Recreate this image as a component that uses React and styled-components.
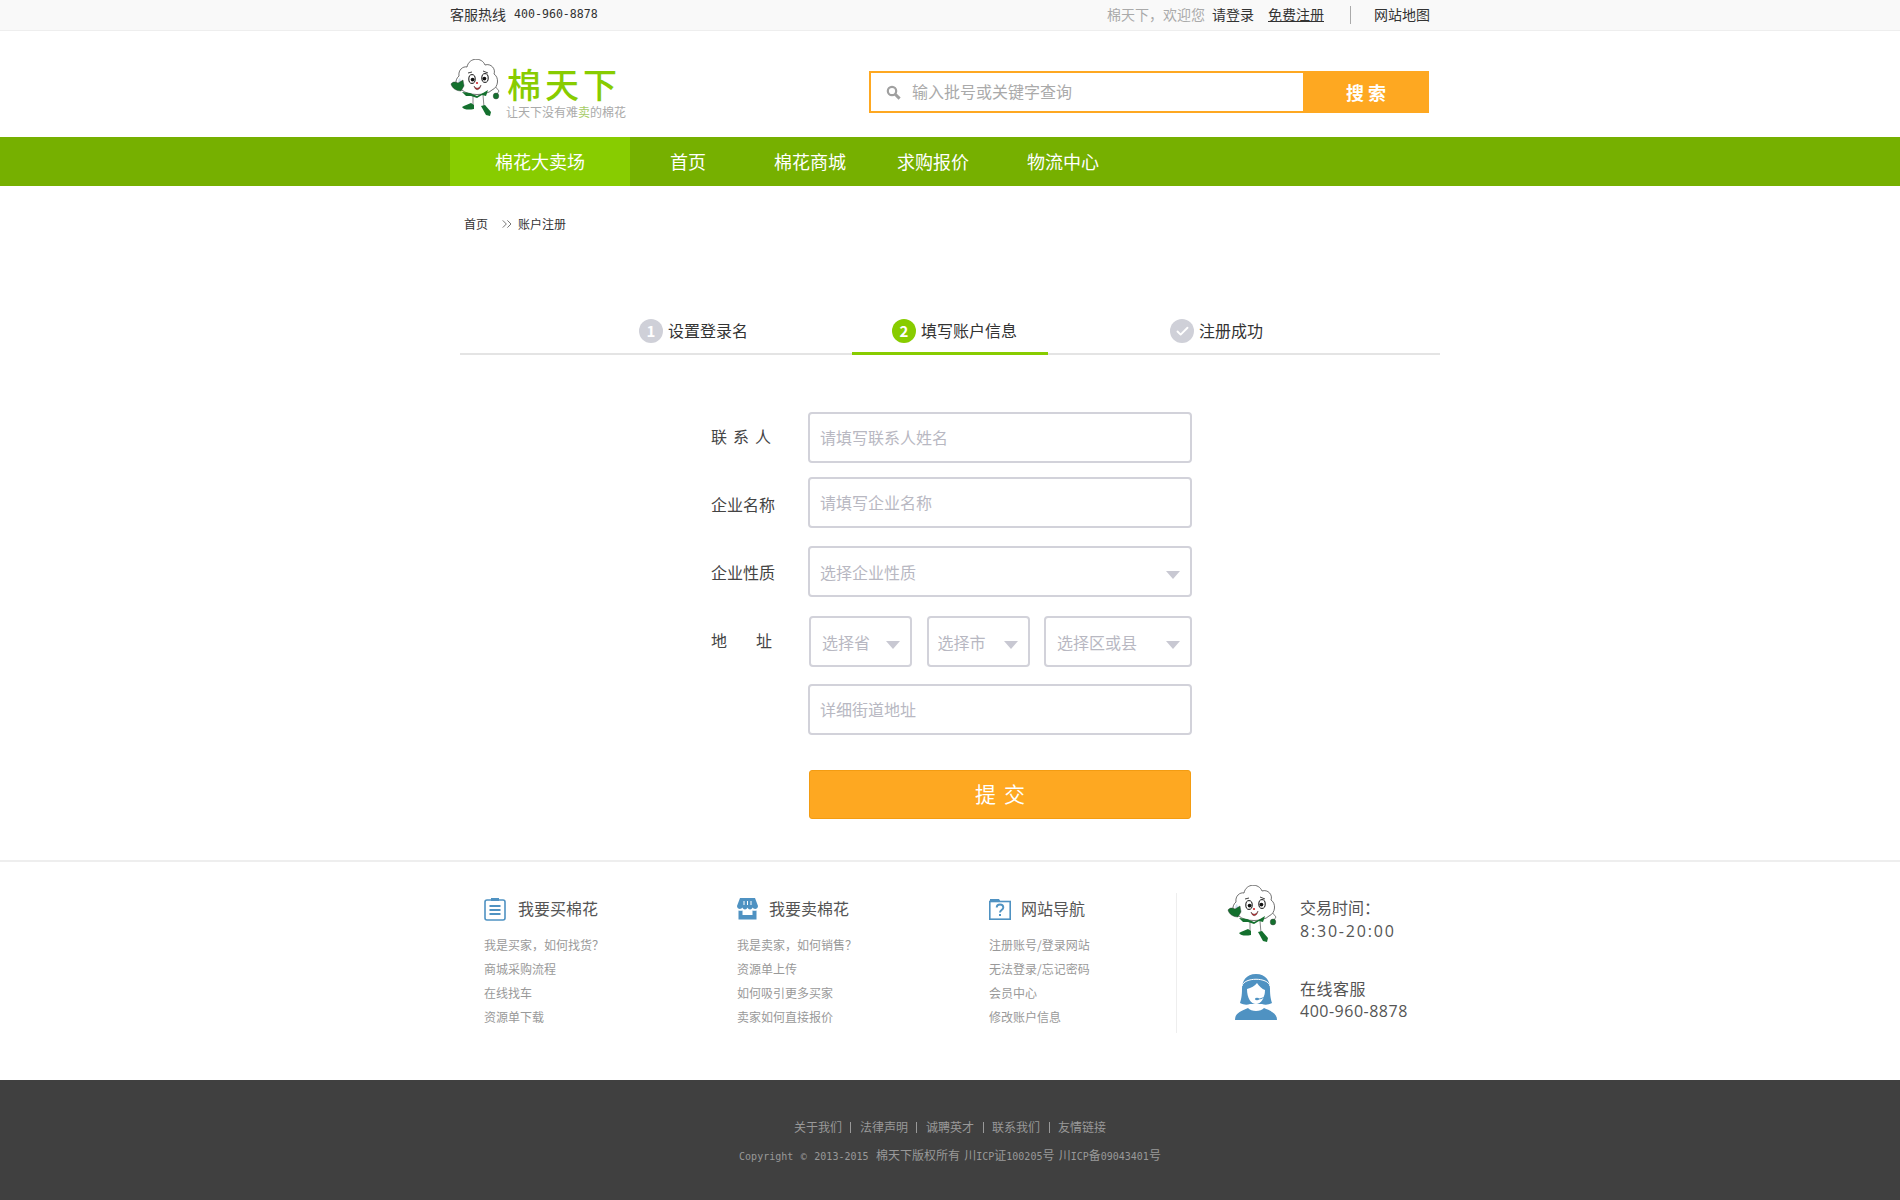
import React from 'react';
import styled, { createGlobalStyle } from 'styled-components';
import { Check, ChevronsRight } from 'lucide-react';

const GlobalStyle = createGlobalStyle`
  html, body {
    margin: 0;
    padding: 0;
    background: #fff;
    font-family: "Noto Sans CJK SC", "Liberation Sans", sans-serif;
    color: #333;
  }
  * { box-sizing: border-box; }
  a { color: inherit; text-decoration: none; }
`;

const Container = styled.div`
  width: 1000px;
  margin: 0 auto;
`;

const TopBar = styled.div`
  height: 31px;
  background: #f9f9f9;
  border-bottom: 1px solid #eee;
  font-size: 14px;
  line-height: 29px;
`;
const TopInner = styled(Container)`
  display: flex;
  justify-content: space-between;
  padding-right: 20px;
`;
const Hotline = styled.div`
  display: flex;
  gap: 8px;
`;
const HotNumber = styled.span`
  font-family: "DejaVu Sans Mono", monospace;
  font-size: 11.6px;
`;
const TopLinks = styled.div`
  display: flex;
  align-items: center;
`;
const Welcome = styled.span`
  color: #aaa;
  margin-right: 7px;
`;
const TopLink = styled.a`
  margin-right: ${(p) => p.$gap}px;
  text-decoration: ${(p) => (p.$underline ? 'underline' : 'none')};
`;
const TopDivider = styled.span`
  width: 1px;
  height: 18px;
  background: #aaa;
  margin: 0 23px 0 0;
`;

const Header = styled(Container)`
  height: 106px;
  padding-top: 28px;
  display: flex;
  align-items: flex-start;
`;
const Logo = styled.div`
  width: 419px;
  display: flex;
  gap: 6px;
`;
const LogoWord = styled.div`
  margin: 7px 0 0 1px;
  font-size: 34px;
  font-weight: 500;
  line-height: 36px;
  letter-spacing: 4px;
  color: #88cc00;
  white-space: nowrap;
`;
const Tagline = styled.div`
  margin-top: 3px;
  font-size: 12px;
  line-height: 14px;
  color: #aaa;
  b {
    font-weight: 400;
    color: #a6cc66;
  }
`;
const SearchBox = styled.form`
  margin-top: 12px;
  width: 560px;
  height: 42px;
  display: flex;
  border: 2px solid #fea821;
`;
const SearchField = styled.div`
  flex: 1;
  display: flex;
  align-items: center;
  gap: 11px;
  padding-left: 15px;
  color: #a0a0a0;
`;
const SearchInput = styled.input`
  flex: 1;
  border: 0;
  outline: 0;
  padding: 0 0 2px;
  font: inherit;
  font-size: 16px;
  &::placeholder { color: #aaa; opacity: 1; }
`;
const SearchButton = styled.button`
  width: 126px;
  margin: -2px -2px -2px 0;
  border: 0;
  padding: 0 0 0 4px;
  background: #fea821;
  color: #fff;
  font: inherit;
  font-size: 18px;
  font-weight: 700;
  letter-spacing: 4px;
`;

const NavBar = styled.nav`
  height: 49px;
  background: #76b000;
`;
const NavList = styled(Container)`
  display: flex;
`;
const NavItem = styled.a`
  margin-left: ${(p) => p.$gap || 0}px;
  font-size: 18px;
  line-height: 49px;
  color: #fff;
  ${(p) =>
    p.$active &&
    `
    width: 180px;
    text-align: center;
    background: #88cc00;
  `}
`;

const Breadcrumb = styled(Container)`
  display: flex;
  align-items: center;
  padding: 30px 0 0 14px;
  height: 46px;
  font-size: 12px;
  line-height: 16px;
`;
const Crumb = styled.a`
  margin-left: ${(p) => p.$gap || 0}px;
`;
const CrumbArrow = styled(ChevronsRight)`
  margin-left: 11px;
  color: #444;
`;

const Steps = styled.div`
  display: flex;
  width: 980px;
  margin: 87px 0 0 10px;
  height: 36px;
  border-bottom: 2px solid #e4e4e4;
`;
const Step = styled.div`
  width: ${(p) => (p.$width ? `${p.$width}px` : 'auto')};
  flex: ${(p) => (p.$width ? 'none' : 1)};
  height: 36px;
  padding-left: ${(p) => p.$pad}px;
  display: flex;
  gap: 5px;
  font-size: 16px;
  line-height: 22px;
  border-bottom: ${(p) => (p.$active ? '3px solid #88cc00' : '0')};
`;
const StepBadge = styled.span`
  width: 24px;
  height: 24px;
  border-radius: 50%;
  display: flex;
  align-items: center;
  justify-content: center;
  background: ${(p) => (p.$active ? '#88cc00' : '#cfd0d8')};
  color: #fff;
  font-size: 15px;
  font-weight: 700;
`;

const Form = styled.form`
  padding-left: 261px;
  width: 100%;
`;
const Row = styled.div`
  display: flex;
  margin-top: ${(p) => p.$top}px;
`;
const Label = styled.label`
  width: 97px;
  height: ${(p) => p.$height || 51}px;
  flex: none;
  padding-top: ${(p) => p.$shift || 0}px;
  font-size: 16px;
  line-height: 49px;
  letter-spacing: ${(p) => p.$spacing || 0}px;
  color: #444;
`;
const Field = styled.div`
  width: 384px;
`;
const TextInput = styled.input`
  display: block;
  width: 100%;
  height: 51px;
  border: 2px solid #d2d2da;
  border-radius: 4px;
  padding: 0 10px 2px;
  outline: 0;
  font: inherit;
  font-size: 16px;
  &::placeholder { color: #b8b8c2; opacity: 1; }
`;
const SelectBox = styled.div`
  width: ${(p) => (p.$width ? `${p.$width}px` : '100%')};
  height: 51px;
  border: 2px solid #d2d2da;
  border-radius: 4px;
  padding: 0 10px 0 ${(p) => p.$pad || 10}px;
  display: flex;
  align-items: center;
  justify-content: space-between;
  font-size: 16px;
  color: #b8b8c2;
`;
const Caret = styled.span`
  margin-top: 6px;
  border-top: 8px solid #c8c8d2;
  border-left: 7px solid transparent;
  border-right: 7px solid transparent;
`;
const AddressRow = styled.div`
  display: flex;
  justify-content: space-between;
  margin-left: 1px;
`;
const SubmitButton = styled.button`
  display: block;
  width: 382px;
  height: 49px;
  margin-left: 1px;
  border: 1px solid #f39c12;
  border-radius: 3px;
  padding: 0 0 3px 8px;
  background: #fea821;
  color: #fff;
  font: inherit;
  font-size: 21px;
  letter-spacing: 8px;
`;

const FooterLinks = styled.div`
  margin-top: 41px;
  height: 220px;
  border-top: 2px solid #eee;
`;
const FooterInner = styled(Container)`
  display: flex;
  padding-left: 34px;
`;
const FooterCol = styled.div`
  width: ${(p) => p.$width}px;
  padding-top: 35px;
`;
const ColTitle = styled.div`
  display: flex;
  align-items: center;
  height: 24px;
  padding-bottom: 2px;
  margin-bottom: 12px;
  font-size: 16px;
  color: #555;
  svg {
    margin: 2px ${(p) => p.$gap}px 0 0;
  }
`;
const ColLink = styled.a`
  display: block;
  font-size: 12px;
  line-height: 24px;
  color: #999;
`;
const ServicePanel = styled.div`
  margin-top: 31px;
  height: 140px;
  padding-left: 50px;
  border-left: 1px solid #eee;
`;
const ServiceRow = styled.div`
  display: flex;
  margin-top: ${(p) => p.$top}px;
`;
const ServiceIcon = styled.div`
  width: 73px;
  padding-left: ${(p) => p.$pad || 0}px;
  flex: none;
`;
const ServiceText = styled.div`
  padding-top: ${(p) => p.$top}px;
  font-family: "Open Sans", "Noto Sans CJK SC", sans-serif;
  font-size: 16px;
  line-height: ${(p) => p.$line}px;
  color: #555;
  letter-spacing: ${(p) => p.$spacing || 0}px;
`;
const Hours = styled.span`
  letter-spacing: 1.8px;
`;

const FooterBottom = styled.footer`
  height: 120px;
  padding-top: 38px;
  background: #404040;
  color: #999;
  font-size: 12px;
`;
const BottomLinks = styled.div`
  display: flex;
  justify-content: center;
  align-items: center;
  gap: 8.5px;
  line-height: 18px;
`;
const Sep = styled.span`
  width: 1px;
  height: 11px;
  background: #999;
`;
const Copyright = styled.div`
  margin-top: 10px;
  text-align: center;
  line-height: 18px;
  white-space: pre;
  word-spacing: 1.5px;
`;
const Latin = styled.span`
  font-family: "DejaVu Sans Mono", monospace;
  font-size: 10px;
`;

const Mascot = () => (
  <svg width="50" height="57" viewBox="0 0 50 57">
    <path d="M23 36 L23 47 M33 36 L34 48 M44 26 L49 32 L47 35" fill="none" stroke="#555" strokeWidth="0.7" />
    <path
      d="M12 31 C5 30 4 21 9 17 C8 11 13 7 17 8 C19 -2 32 -2 35 6 C41 4 46 10 44 15 C49 18 49 28 42 31 C36 37 18 37 12 31 Z"
      fill="#fff"
      stroke="#333"
      strokeWidth="0.7"
    />
    <path d="M12 27 C8 25 7 21 10 19 C11 23 13 25 15 26 Z" fill="#cfe3f2" />
    <ellipse cx="22" cy="20" rx="3.2" ry="4.4" fill="#fff" stroke="#111" strokeWidth="1" />
    <ellipse cx="35" cy="19" rx="3.2" ry="4.4" fill="#fff" stroke="#111" strokeWidth="1" />
    <circle cx="22.6" cy="20.6" r="1.9" fill="#111" />
    <circle cx="34.4" cy="19.6" r="1.9" fill="#111" />
    <path d="M18 14 L22 13 M33 12 L38 14" stroke="#111" strokeWidth="0.8" />
    <circle cx="27" cy="24" r="1.1" fill="#c8282d" />
    <path d="M24 27 C26 30 29 30 31 26 C30 32 25 32 24 27 Z" fill="#c8282d" stroke="#222" strokeWidth="0.4" />
    <path d="M12 33 L20 34 L27 37 L33 34 L38 31 L36 37 L32 36 L27 39 L21 37 L16 37 Z" fill="#14702e" />
    <path d="M1 25 C3 22 6 23 8 24 L13 21 L14 27 L11 32 C6 32 2 29 1 25 Z" fill="#14702e" stroke="#333" strokeWidth="0.4" />
    <ellipse cx="46" cy="37" rx="2.8" ry="3" fill="#14702e" stroke="#333" strokeWidth="0.4" />
    <path d="M12 48 C15 46 19 45 21 44 L24 46 L24 50 C19 51 14 51 12 48 Z" fill="#14702e" />
    <path d="M31 47 L35 46 L41 53 L40 57 L36 56 Z" fill="#14702e" />
  </svg>
);

const SearchIcon = () => (
  <svg width="15" height="15" viewBox="0 0 15 15" fill="none" stroke="currentColor">
    <circle cx="6" cy="6" r="4.2" strokeWidth="2.2" />
    <path d="M9.2 9.2 L13.6 13.6" strokeWidth="3" />
  </svg>
);

const BuyIcon = () => (
  <svg width="23" height="23" viewBox="0 0 23 23" fill="none" stroke="#4f92c2">
    <rect x="1" y="2" width="20" height="20" rx="2" strokeWidth="1.6" />
    <rect x="7" y="0" width="8" height="3" fill="#4f92c2" stroke="none" />
    <path d="M5.5 8 H16.5 M5.5 12 H16.5 M5.5 16 H16.5" strokeWidth="1.8" />
  </svg>
);

const SellIcon = () => (
  <svg width="21" height="22" viewBox="0 0 21 22" fill="#4f92c2">
    <path d="M3 0 H18 L21 8 C21 11 17 12 15.7 9.5 C14.5 12 11.5 12 10.5 9.5 C9.5 12 6.5 12 5.3 9.5 C4 12 0 11 0 8 Z" />
    <path d="M7 3 V7 M10.5 3 V7 M14 3 V7" stroke="#fff" strokeWidth="1" />
    <path d="M1.5 12.5 C3 13 4.5 13 5.5 12.4 V17 H15.5 V12.4 C16.5 13 18 13 19.5 12.5 V21.5 H1.5 Z" />
  </svg>
);

const HelpIcon = () => (
  <svg width="22" height="21" viewBox="0 0 22 21" fill="none" stroke="#4f92c2">
    <path d="M1 0 H10 L11.5 2.5 H1 Z" fill="#4f92c2" stroke="none" />
    <rect x="0.8" y="2.5" width="20.4" height="17.7" strokeWidth="1.6" />
    <path d="M7.7 8.5 C7.7 4.5 14.3 4.5 14.3 8.5 C14.3 11 11 11 11 13.5" strokeWidth="1.9" />
    <path d="M11 15 V17" strokeWidth="2" />
  </svg>
);

const AgentIcon = () => (
  <svg width="42" height="46" viewBox="0 0 42 46">
    <path d="M21 0 C11 0 7 7 7 15 C7 22 6 26 5 29 C9 31 12 31 15 30 H27 C30 31 33 31 37 29 C36 26 35 22 35 15 C35 7 31 0 21 0 Z" fill="#4f92c2" />
    <path d="M12 15 C16 14 20 12 22 9 C24 12 27 15 30 16 C30 24 26 30 21 30 C16 30 12 24 12 15 Z" fill="#fff" />
    <path d="M7 12 C9 3 33 3 35 12" fill="none" stroke="#fff" strokeWidth="1" />
    <path d="M31 18 C31 23 27 25 23 25" fill="none" stroke="#4f92c2" strokeWidth="1" />
    <ellipse cx="22" cy="25" rx="2" ry="1.2" fill="#4f92c2" />
    <path d="M0 46 C0 39 6 37 13 34 C16 38 26 38 29 34 C36 37 42 39 42 46 Z" fill="#4f92c2" />
  </svg>
);

const footerCols = [
  {
    title: '我要买棉花',
    icon: <BuyIcon />,
    gap: 11,
    width: 253,
    links: ['我是买家，如何找货？', '商城采购流程', '在线找车', '资源单下载'],
  },
  {
    title: '我要卖棉花',
    icon: <SellIcon />,
    gap: 11,
    width: 252,
    links: ['我是卖家，如何销售？', '资源单上传', '如何吸引更多买家', '卖家如何直接报价'],
  },
  {
    title: '网站导航',
    icon: <HelpIcon />,
    gap: 10,
    width: 187,
    links: ['注册账号/登录网站', '无法登录/忘记密码', '会员中心', '修改账户信息'],
  },
];

const bottomLinks = ['关于我们', '法律声明', '诚聘英才', '联系我们', '友情链接'];

const App = () => (
  <>
    <GlobalStyle />
    <TopBar>
      <TopInner>
        <Hotline>
          <span>客服热线</span>
          <HotNumber>400-960-8878</HotNumber>
        </Hotline>
        <TopLinks>
          <Welcome>棉天下，欢迎您</Welcome>
          <TopLink $gap={14}>请登录</TopLink>
          <TopLink $gap={26} $underline>免费注册</TopLink>
          <TopDivider />
          <a>网站地图</a>
        </TopLinks>
      </TopInner>
    </TopBar>

    <Header>
      <Logo>
        <Mascot />
        <div>
          <LogoWord>棉天下</LogoWord>
          <Tagline>
            让天下没有难<b>卖</b>的棉花
          </Tagline>
        </div>
      </Logo>
      <SearchBox>
        <SearchField>
          <SearchIcon />
          <SearchInput placeholder="输入批号或关键字查询" />
        </SearchField>
        <SearchButton type="button">搜索</SearchButton>
      </SearchBox>
    </Header>

    <NavBar>
      <NavList>
        <NavItem $active>棉花大卖场</NavItem>
        <NavItem $gap={40}>首页</NavItem>
        <NavItem $gap={68}>棉花商城</NavItem>
        <NavItem $gap={51}>求购报价</NavItem>
        <NavItem $gap={58}>物流中心</NavItem>
      </NavList>
    </NavBar>

    <Breadcrumb>
      <Crumb>首页</Crumb>
      <CrumbArrow size={16} strokeWidth={1.1} />
      <Crumb $gap={3}>账户注册</Crumb>
    </Breadcrumb>

    <Container>
      <Steps>
        <Step $width={392} $pad={179}>
          <StepBadge>1</StepBadge>
          设置登录名
        </Step>
        <Step $width={196} $pad={40} $active>
          <StepBadge $active>2</StepBadge>
          填写账户信息
        </Step>
        <Step $pad={122}>
          <StepBadge>
            <Check size={15} strokeWidth={3} />
          </StepBadge>
          注册成功
        </Step>
      </Steps>

      <Form>
        <Row $top={57}>
          <Label $spacing={6}>联系人</Label>
          <Field>
            <TextInput placeholder="请填写联系人姓名" />
          </Field>
        </Row>
        <Row $top={14}>
          <Label $shift={3}>企业名称</Label>
          <Field>
            <TextInput placeholder="请填写企业名称" />
          </Field>
        </Row>
        <Row $top={18}>
          <Label $shift={2}>企业性质</Label>
          <Field>
            <SelectBox>
              选择企业性质
              <Caret />
            </SelectBox>
          </Field>
        </Row>
        <Row $top={19}>
          <Label $spacing={29}>地址</Label>
          <Field>
            <AddressRow>
              <SelectBox $width={103} $pad={11}>
                选择省
                <Caret />
              </SelectBox>
              <SelectBox $width={103} $pad={9}>
                选择市
                <Caret />
              </SelectBox>
              <SelectBox $width={148} $pad={11}>
                选择区或县
                <Caret />
              </SelectBox>
            </AddressRow>
          </Field>
        </Row>
        <Row $top={17}>
          <Label />
          <Field>
            <TextInput placeholder="详细街道地址" />
          </Field>
        </Row>
        <Row $top={35}>
          <Label $height={49} />
          <Field>
            <SubmitButton type="button">提交</SubmitButton>
          </Field>
        </Row>
      </Form>
    </Container>

    <FooterLinks>
      <FooterInner>
        {footerCols.map((col) => (
          <FooterCol key={col.title} $width={col.width}>
            <ColTitle $gap={col.gap}>
              {col.icon}
              {col.title}
            </ColTitle>
            {col.links.map((link) => (
              <ColLink key={link}>{link}</ColLink>
            ))}
          </FooterCol>
        ))}
        <ServicePanel>
          <ServiceRow $top={-8}>
            <ServiceIcon>
              <Mascot />
            </ServiceIcon>
            <ServiceText $top={12} $line={23}>
              交易时间：
              <br />
              <Hours>8:30-20:00</Hours>
            </ServiceText>
          </ServiceRow>
          <ServiceRow $top={27}>
            <ServiceIcon $pad={8}>
              <AgentIcon />
            </ServiceIcon>
            <ServiceText $top={4} $spacing={0.5} $line={22}>
              在线客服
              <br />
              400-960-8878
            </ServiceText>
          </ServiceRow>
        </ServicePanel>
      </FooterInner>
    </FooterLinks>

    <FooterBottom>
      <BottomLinks>
        {bottomLinks.map((link, i) => (
          <React.Fragment key={link}>
            {i > 0 && <Sep />}
            <a>{link}</a>
          </React.Fragment>
        ))}
      </BottomLinks>
      <Copyright>
        <Latin>Copyright © 2013-2015 </Latin>棉天下版权所有 川<Latin>ICP</Latin>证<Latin>100205</Latin>号 川
        <Latin>ICP</Latin>备<Latin>09043401</Latin>号
      </Copyright>
    </FooterBottom>
  </>
);

export default App;
